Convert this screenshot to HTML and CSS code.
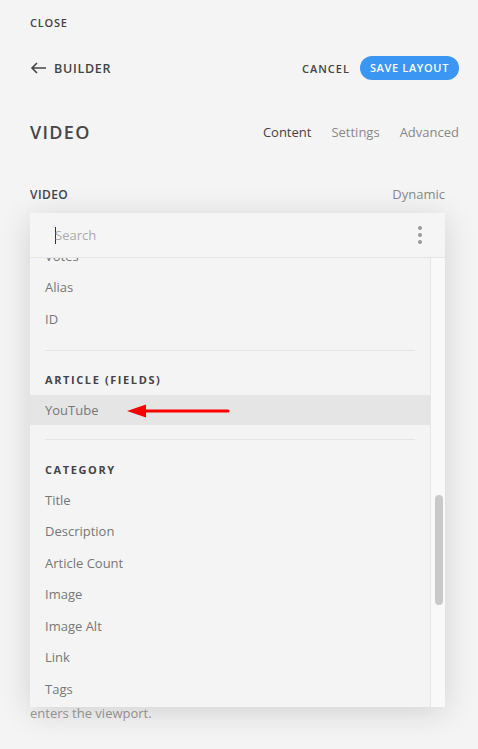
FILE: index.html
```html
<!DOCTYPE html>
<html>
<head>
<meta charset="utf-8">
<link rel="stylesheet" href="styles.css">
</head>
<body>
<div class="panel">
  <div class="close-row"><span class="caps close">CLOSE</span></div>
  <div class="top-row">
    <div class="back">
      <svg class="arrow-left" width="17" height="12" viewBox="0 0 17 12"><path d="M16 6H2M7 1L2 6l5 5" fill="none" stroke="#444" stroke-width="1.6"/></svg>
      <span class="caps builder">BUILDER</span>
    </div>
    <div class="actions">
      <span class="caps cancel">CANCEL</span>
      <span class="caps save">SAVE LAYOUT</span>
    </div>
  </div>
  <div class="title-row">
    <h1 class="title">VIDEO</h1>
    <nav class="tabs">
      <span class="tab active">Content</span>
      <span class="tab">Settings</span>
      <span class="tab">Advanced</span>
    </nav>
  </div>
  <div class="field">
    <div class="field-head">
      <span class="caps field-label">VIDEO</span>
      <span class="dynamic">Dynamic</span>
    </div>
    <div class="field-body"></div>
    <p class="desc">enters the viewport.</p>

    <div class="dropdown">
      <div class="search">
        <span class="cursor"></span><span class="placeholder">Search</span>
        <span class="dots"><i></i><i></i><i></i></span>
      </div>
      <div class="list-wrap">
        <div class="list">
          <div class="list-inner">
            <div class="item">Votes</div>
            <div class="item">Alias</div>
            <div class="item">ID</div>
            <div class="divider first"></div>
            <div class="group-head">ARTICLE (FIELDS)</div>
            <div class="item selected">YouTube
              <svg class="red-arrow" width="104" height="14" viewBox="0 0 104 14"><path d="M0 7L19 0.5V13.5Z" fill="#f00"/><path d="M18 7H101" stroke="#f00" stroke-width="3" stroke-linecap="round"/></svg>
            </div>
            <div class="divider second"></div>
            <div class="group-head">CATEGORY</div>
            <div class="item">Title</div>
            <div class="item">Description</div>
            <div class="item">Article Count</div>
            <div class="item">Image</div>
            <div class="item">Image Alt</div>
            <div class="item">Link</div>
            <div class="item">Tags</div>
          </div>
        </div>
        <div class="scrollbar"><div class="thumb"></div></div>
      </div>
    </div>
  </div>
</div>
</body>
</html>
```
FILE: styles.css
```css
html, body { margin: 0; padding: 0; }
body {
  background: #f4f4f4;
  font-family: "Open Sans", sans-serif;
  color: #444;
  width: 478px;
  height: 749px;
  overflow: hidden;
}
.panel { padding: 0 19px 0 30px; }
.caps {
  font-family: "Open Sans", sans-serif;
  font-weight: 600;
  text-transform: uppercase;
}
.close-row { height: 44px; display: flex; align-items: center; }
.close { font-size: 11px; letter-spacing: 0.8px; color: #444; }
.top-row {
  height: 48px;
  display: flex;
  align-items: center;
  justify-content: space-between;
}
.back { display: flex; align-items: center; gap: 7px; }
.arrow-left { display: block; }
.builder { font-size: 12.5px; letter-spacing: 0.7px; }
.actions { display: flex; align-items: center; gap: 10px; }
.cancel { font-size: 11px; letter-spacing: 1px; }
.save {
  background: #3a96f2;
  color: #fff;
  font-size: 11px;
  letter-spacing: 0.65px;
  height: 24px;
  line-height: 24px;
  padding: 0 10px;
  border-radius: 12px;
}
.title-row {
  height: 35px;
  margin-top: 22px;
  display: flex;
  align-items: center;
  justify-content: space-between;
}
.title {
  margin: 0;
  font-size: 18px;
  font-weight: 600;
  letter-spacing: 1.3px;
  color: #474747;
}
.tabs { display: flex; gap: 20px; font-size: 13px; }
.tab { color: #888; }
.tab.active { color: #444; }
.field { position: relative; margin-right: 14px; margin-top: 35px; }
.field-head {
  height: 20px;
  display: flex;
  align-items: center;
  justify-content: space-between;
}
.field-label { font-size: 12px; color: #444; letter-spacing: 0.4px; }
.dynamic { font-size: 13px; color: #888; }
.field-body { height: 500px; }
.desc { margin: 0; font-size: 13px; color: #999; line-height: 18px; }

.dropdown {
  position: absolute;
  left: 0;
  right: 0;
  top: 29px;
  height: 494px;
  background: #f4f4f4;
  box-shadow: 0 5px 30px rgba(0,0,0,0.14);
  display: flex;
  flex-direction: column;
}
.search {
  height: 44px;
  border-bottom: 1px solid #e5e5e5;
  display: flex;
  align-items: center;
  padding-left: 25px;
  padding-right: 23px;
  background: #f5f5f5;
}
.cursor { width: 1px; height: 17px; background: #333; margin-right: -1px; }
.placeholder { font-size: 13px; color: #aaa; flex: 1; }
.dots { display: flex; flex-direction: column; gap: 3px; }
.dots i { display: block; width: 4px; height: 4px; border-radius: 50%; background: #999; }
.list-wrap { flex: 1; display: flex; min-height: 0; }
.list { flex: 1; overflow: hidden; position: relative; }
.list-inner { margin-top: -18px; }
.item {
  padding: 0 15px;
  height: 31.5px;
  display: flex;
  align-items: center;
  font-size: 13px;
  color: #777;
  position: relative;
}
.item.selected { background: #e5e5e5; height: 30.5px; }
.red-arrow { position: absolute; left: 97px; top: 9px; }
.divider { height: 1px; background: #e5e5e5; margin: 15px 15px; }
.divider.first { margin-bottom: 14px; }
.divider.second { margin-top: 14px; margin-bottom: 14px; }
.group-head {
  height: 30px;
  display: flex;
  align-items: center;
  padding: 0 15px;
  font-size: 11px;
  font-weight: 700;
  letter-spacing: 1.6px;
  color: #444;
}
.scrollbar {
  width: 14px;
  border-left: 1px solid #e5e5e5;
  background: #f9f9f9;
  position: relative;
}
.thumb {
  position: absolute;
  left: 4px;
  top: 237px;
  width: 8px;
  height: 110px;
  border-radius: 4px;
  background: #c9c9c9;
}
```
